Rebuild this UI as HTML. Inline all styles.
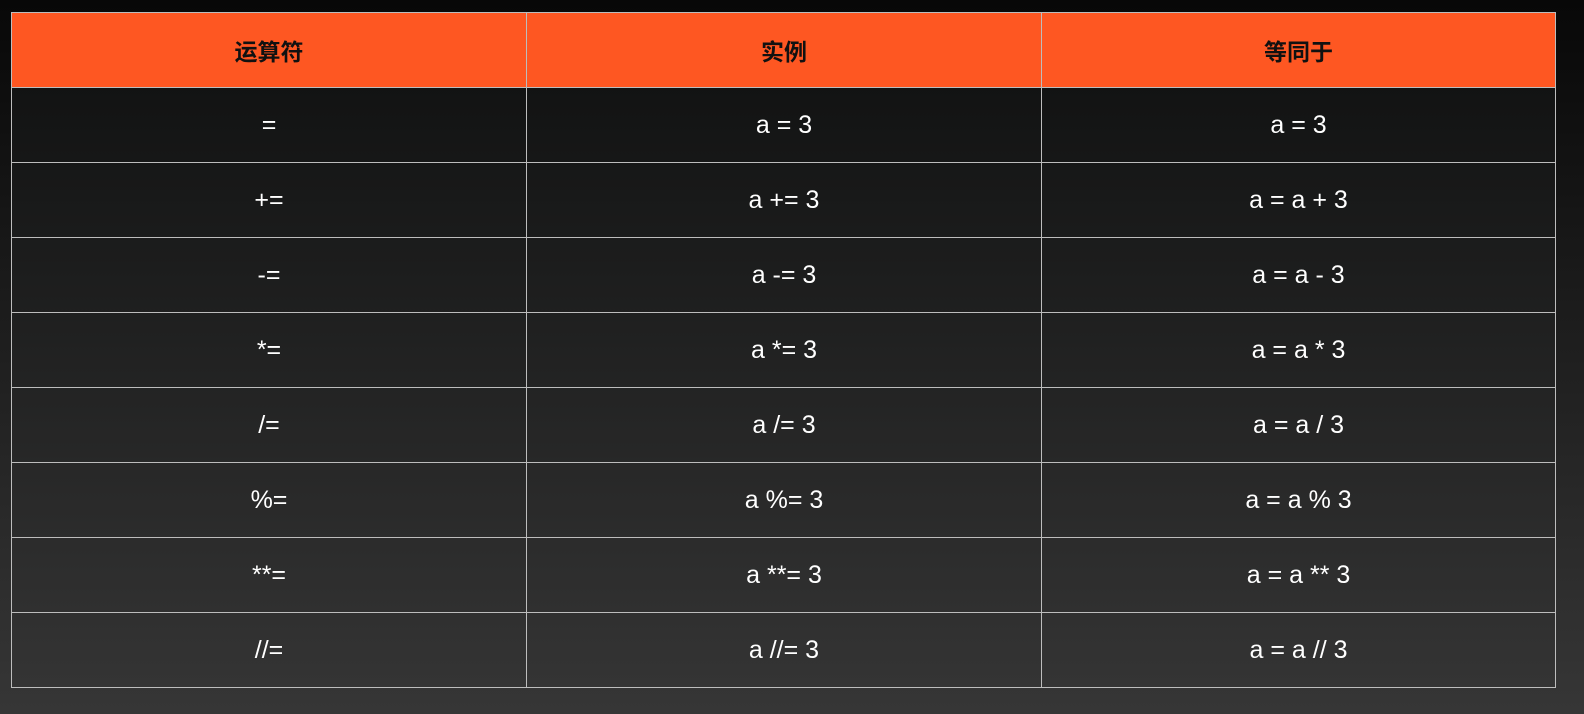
<!DOCTYPE html>
<html><head><meta charset="utf-8"><style>
html,body{margin:0;padding:0}
body{width:1584px;height:714px;background:linear-gradient(#080808,#363636);position:relative;overflow:hidden;font-family:"Liberation Sans","Noto Sans CJK SC",sans-serif}
table{position:absolute;left:11px;top:12px;width:1545px;height:676px;border-collapse:collapse;background:linear-gradient(#0e0f0f,#343434);}
td,th{border:1.5px solid #bdbdbd;text-align:center;color:#fff;font-size:25px;height:73px;padding:0}
th{background:#fe5722;color:#111;font-size:23px;font-weight:bold}
td:nth-child(1),th:nth-child(1){width:514px}
td:nth-child(2),th:nth-child(2){width:514px}
</style></head><body>
<table>
<tr><th>运算符</th><th>实例</th><th>等同于</th></tr>
<tr><td>=</td><td>a = 3</td><td>a = 3</td></tr>
<tr><td>+=</td><td>a += 3</td><td>a = a + 3</td></tr>
<tr><td>-=</td><td>a -= 3</td><td>a = a - 3</td></tr>
<tr><td>*=</td><td>a *= 3</td><td>a = a * 3</td></tr>
<tr><td>/=</td><td>a /= 3</td><td>a = a / 3</td></tr>
<tr><td>%=</td><td>a %= 3</td><td>a = a % 3</td></tr>
<tr><td>**=</td><td>a **= 3</td><td>a = a ** 3</td></tr>
<tr><td>//=</td><td>a //= 3</td><td>a = a // 3</td></tr>
</table>
</body></html>
